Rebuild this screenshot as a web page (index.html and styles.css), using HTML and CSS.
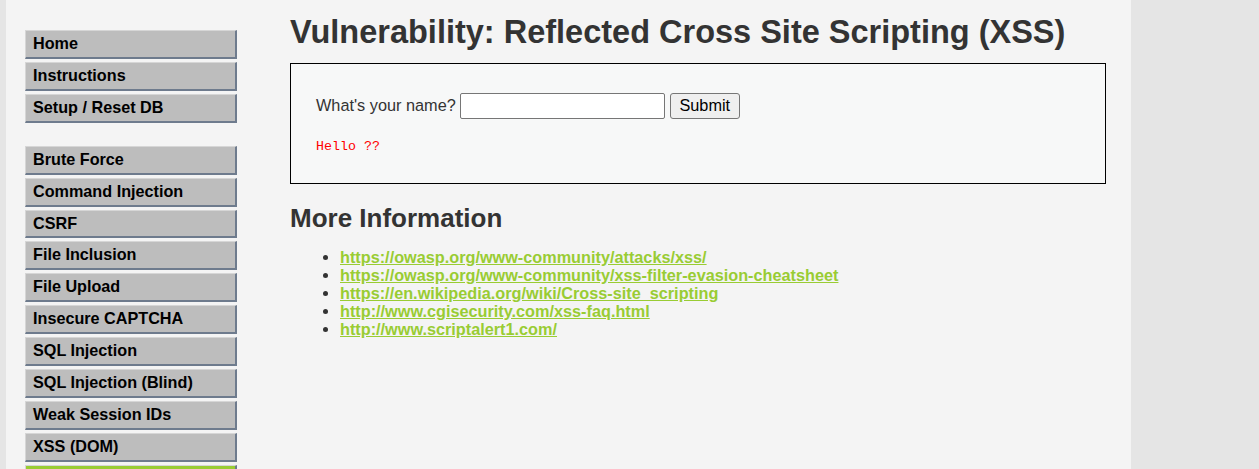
FILE: index.html
```html
<!DOCTYPE html>
<html>
<head>
<meta charset="utf-8">
<title>Vulnerability: Reflected Cross Site Scripting (XSS)</title>
<link rel="stylesheet" href="styles.css">
</head>
<body>
<div class="container">
  <nav class="menu">
    <ul class="menu-group">
      <li><a class="menu-item" href="#">Home</a></li>
      <li><a class="menu-item" href="#">Instructions</a></li>
      <li><a class="menu-item" href="#">Setup / Reset DB</a></li>
    </ul>
    <ul class="menu-group">
      <li><a class="menu-item" href="#">Brute Force</a></li>
      <li><a class="menu-item" href="#">Command Injection</a></li>
      <li><a class="menu-item" href="#">CSRF</a></li>
      <li><a class="menu-item" href="#">File Inclusion</a></li>
      <li><a class="menu-item" href="#">File Upload</a></li>
      <li><a class="menu-item" href="#">Insecure CAPTCHA</a></li>
      <li><a class="menu-item" href="#">SQL Injection</a></li>
      <li><a class="menu-item" href="#">SQL Injection (Blind)</a></li>
      <li><a class="menu-item" href="#">Weak Session IDs</a></li>
      <li><a class="menu-item" href="#">XSS (DOM)</a></li>
      <li><a class="menu-item selected" href="#">XSS (Reflected)</a></li>
      <li><a class="menu-item" href="#">XSS (Stored)</a></li>
      <li><a class="menu-item" href="#">CSP Bypass</a></li>
      <li><a class="menu-item" href="#">JavaScript</a></li>
    </ul>
  </nav>
  <main class="main">
    <h1 class="title">Vulnerability: Reflected Cross Site Scripting (XSS)</h1>
    <div class="vuln-area">
      <form class="name-form">
        <label class="name-label" for="name">What's your name?</label>
        <input class="name-input" id="name" type="text" name="name">
        <button class="submit-btn" type="button">Submit</button>
      </form>
      <pre class="output">Hello ??</pre>
    </div>
    <h2 class="subtitle">More Information</h2>
    <ul class="links">
      <li><a href="#">https://owasp.org/www-community/attacks/xss/</a></li>
      <li><a href="#">https://owasp.org/www-community/xss-filter-evasion-cheatsheet</a></li>
      <li><a href="#">https://en.wikipedia.org/wiki/Cross-site_scripting</a></li>
      <li><a href="#">http://www.cgisecurity.com/xss-faq.html</a></li>
      <li><a href="#">http://www.scriptalert1.com/</a></li>
    </ul>
  </main>
</div>
</body>
</html>
```
FILE: styles.css
```css
html, body {
  margin: 0;
  padding: 0;
}
body {
  background: #e5e5e5;
  font-family: "Liberation Sans", Arial, sans-serif;
  font-size: 16px;
  color: #333;
  overflow: hidden;
}
.container {
  margin-left: 6px;
  width: 1125px;
  min-height: 100vh;
  background: #f4f4f4;
  display: flex;
  align-items: flex-start;
}
.menu {
  width: 212px;
  margin-left: 19px;
  padding-top: 27px;
  flex: none;
}
.menu-group {
  list-style: none;
  margin: 0 0 23px 0;
  padding: 0;
}
.menu-item {
  display: block;
  margin: 3px 0;
  padding: 3px 7px;
  line-height: 19.9px;
  font-size: 16.2px;
  background: #bdbdbd;
  border-top: 1px solid #d6d6d6;
  border-left: 1px solid #d6d6d6;
  border-right: 2px solid #6e7b8d;
  border-bottom: 2px solid #6e7b8d;
  color: #000;
  font-weight: bold;
  text-decoration: none;
}
.menu-item.selected {
  background: #99cc33;
}
.main {
  margin-left: 53px;
  width: 816px;
  flex: none;
}
.title {
  margin: 14px 0 12px 0;
  font-size: 32.5px;
  line-height: 36.8px;
  font-weight: bold;
  color: #333;
}
.vuln-area {
  border: 1px solid #000;
  background: #f7f8f8;
  padding: 29px 25px 29px 25px;
  box-sizing: border-box;
  height: 121px;
}
.name-form {
  display: flex;
  align-items: center;
  height: 26px;
  margin: 0;
}
.name-label {
  margin-right: 4px;
  font-size: 16.3px;
}
.name-input {
  width: 205px;
  height: 26px;
  box-sizing: border-box;
  border: 1px solid #767676;
  border-radius: 2px;
  background: #fff;
  margin: 0 5px 0 0;
  padding: 1px 2px;
  font-family: "Liberation Sans", Arial, sans-serif;
  font-size: 16px;
}
.submit-btn {
  width: 70px;
  height: 26px;
  box-sizing: border-box;
  border: 1px solid #767676;
  border-radius: 3px;
  background: #efefef;
  color: #000;
  font-family: "Liberation Sans", Arial, sans-serif;
  font-size: 16.3px;
  padding: 0;
}
.output {
  margin: 20px 0 0 0;
  font-family: "Liberation Mono", "Courier New", monospace;
  font-size: 13.33px;
  line-height: 15px;
  color: #f00;
}
.subtitle {
  margin: 20px 0 0 0;
  font-size: 26px;
  line-height: 29.9px;
  font-weight: bold;
  color: #333;
}
.links {
  margin: 14px 0 0 0;
  padding-left: 50px;
  font-size: 16.25px;
  line-height: 18px;
}
.links li {
  line-height: 18px;
}
.links a {
  color: #99cc33;
  font-weight: bold;
  text-decoration: underline;
}
```
